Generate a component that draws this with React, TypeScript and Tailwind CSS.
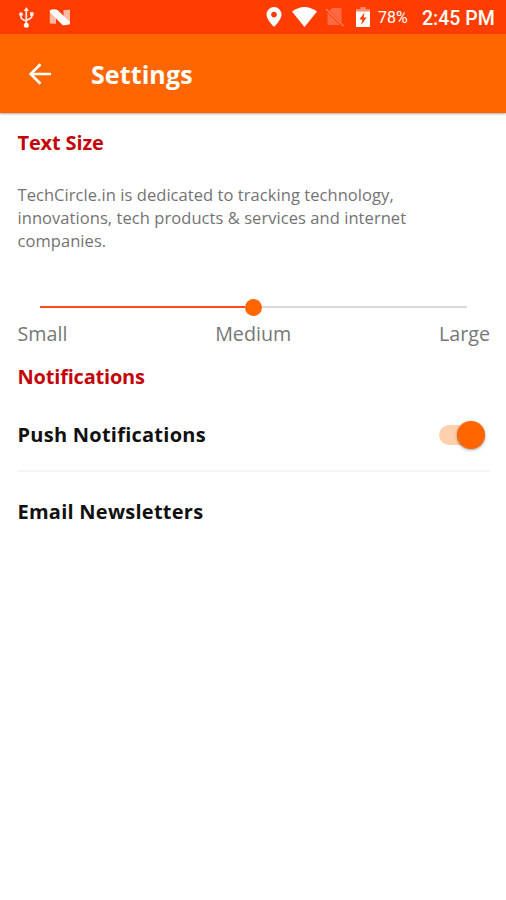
function StatusBar() {
  return (
    <div className="flex h-[34px] items-center bg-[#ff3d00] font-['Roboto',sans-serif] text-white">
      <svg className="ml-[18px] h-[22px] w-[17px] shrink-0" viewBox="0 0 17 22" fill="none" stroke="#ffe9e2" strokeWidth="1.7">
        <path d="M8.3 18V4M3 8v3.200q0 1.800 5 3.800M13.800 8v2.600q0 1.900-5.400 3.600" />
        <path d="M8.300 1L5.700 5h5.200z" fill="#ffe9e2" stroke="none" />
        <circle cx="8.300" cy="19.300" r="2.500" fill="#fff" stroke="none" />
        <circle cx="3" cy="8.200" r="1.900" fill="#ffe9e2" stroke="none" />
        <path d="M12 6.200h3.600v3.600H12z" fill="#ffe9e2" stroke="none" />
      </svg>
      <svg className="ml-[14px] h-[17px] w-[22px] shrink-0" viewBox="0 0 22 17">
        <path d="M.8 1.300H7v13.500L.8 14.600zM14.500 1L21 .8v14.700h-6.500z" fill="#ffb8a2" />
        <path d="M1 1.200Q5-.500 8.500 1L21 12.900v1.700q-4 2.600-7.500 1.300L1 3.200z" fill="#fff" />
      </svg>
      <svg className="ml-[195px] h-[20px] w-[16px] shrink-0" viewBox="0 0 16 20">
        <path fillRule="evenodd" fill="#fff" d="M8 0a7.600 7.600 0 0 0-7.500 7.600C.5 13 8 20 8 20s7.500-7 7.500-12.400A7.600 7.600 0 0 0 8 0zm0 4.800a2.800 2.800 0 1 1 0 5.600 2.800 2.800 0 0 1 0-5.600z" />
      </svg>
      <svg className="ml-[10px] h-[20px] w-[25px] shrink-0" viewBox="0 0 25 20">
        <path fill="#fff" d="M0 4.600Q12.500-4.400 25 4.600L12.500 20z" />
      </svg>
      <svg className="ml-[8px] h-[20px] w-[20px] shrink-0" viewBox="0 0 20 20">
        <path d="M7 1H16.500v14.500L4.500 3.500zM2.500 5.500L15 18H2.500z" fill="#ff6a42" />
        <path d="M1 2l17.500 17" stroke="#ff7c58" strokeWidth="1.600" />
      </svg>
      <svg className="ml-[11px] h-[20px] w-[14px] shrink-0" viewBox="0 0 14 20">
        <path d="M4.500 0h5v2H14v4H0V2h4.500z" fill="#ff8c69" />
        <path d="M0 4.500h14V20H0z" fill="#fff" />
        <path d="M8.500 5.500L3.300 12.500h3l-1 5.500 5.300-7.500h-3z" fill="#ff3d00" />
      </svg>
      <span className="ml-[8px] mt-[2px] w-[31px] whitespace-nowrap text-[16px] leading-none">78%</span>
      <span className="ml-[13px] mt-[3px] whitespace-nowrap text-[19.500px] font-medium leading-none">2:45 PM</span>
    </div>
  );
}

function AppBar() {
  return (
    <header className="flex h-[79px] items-center bg-[#ff6600] shadow-[0_1px_2px_rgba(0,0,0,0.35)]">
      <svg className="ml-[28px] h-[24px] w-[24px]" viewBox="0 0 24 24" fill="none" stroke="#fff" strokeWidth="2.700">
        <path d="M23 12H3M12.500 2.200L2.700 12l9.800 9.800" />
      </svg>
      <h1 className="ml-[39px] text-[25px] font-bold leading-[34px] tracking-[0.1px] text-white">Settings</h1>
    </header>
  );
}

export default function App() {
  return (
    <div className="flex h-[900px] w-[506px] flex-col overflow-hidden bg-white font-['Open_Sans',sans-serif]">
      <StatusBar />
      <AppBar />
      <main className="flex flex-col pl-[17.5px] pr-[16px]">
        <h2 className="mt-[16px] text-[20px] font-bold leading-[28px] tracking-[-0.15px] text-[#c4060c]">Text Size</h2>
        <p className="mt-[26px] text-[16.500px] leading-[23px] tracking-[0.06px] text-[#737373]">
          TechCircle.in is dedicated to tracking technology,<br />
          innovations, tech products &amp; services and internet<br />
          companies.
        </p>
        <div className="ml-[22.5px] mt-[46.5px] flex h-[17px] w-[427px] items-center">
          <div className="h-[2px] w-[205px] bg-[#ff4a1c]" />
          <div className="h-[17px] w-[17px] rounded-full bg-[#ff6600]" />
          <div className="h-[2px] flex-1 bg-[#d9d9d9]" />
        </div>
        <div className="mt-[4.5px] flex justify-between text-[19.700px] leading-[28px] text-[#777]">
          <span>Small</span>
          <span>Medium</span>
          <span>Large</span>
        </div>
        <h2 className="mt-[15px] text-[20px] font-bold leading-[28px] tracking-[-0.200px] text-[#c4060c]">Notifications</h2>
        <div className="mt-[30px] flex h-[28px] items-center justify-between">
          <span className="text-[20px] font-bold leading-[28px] tracking-[0.250px] text-[#111]">Push Notifications</span>
          <div className="mr-[5px] flex h-[20px] w-[46px] items-center justify-end rounded-full bg-[#ffd0ad]">
            <div className="h-[28px] w-[28px] shrink-0 rounded-full bg-[#ff6600] shadow-[0_1px_3px_rgba(0,0,0,0.4)]" />
          </div>
        </div>
        <div className="mt-[21px] h-[2px] bg-[#f5f5f5]" />
        <span className="mt-[26px] text-[20px] font-bold leading-[28px] tracking-[0.250px] text-[#111]">Email Newsletters</span>
      </main>
    </div>
  );
}
